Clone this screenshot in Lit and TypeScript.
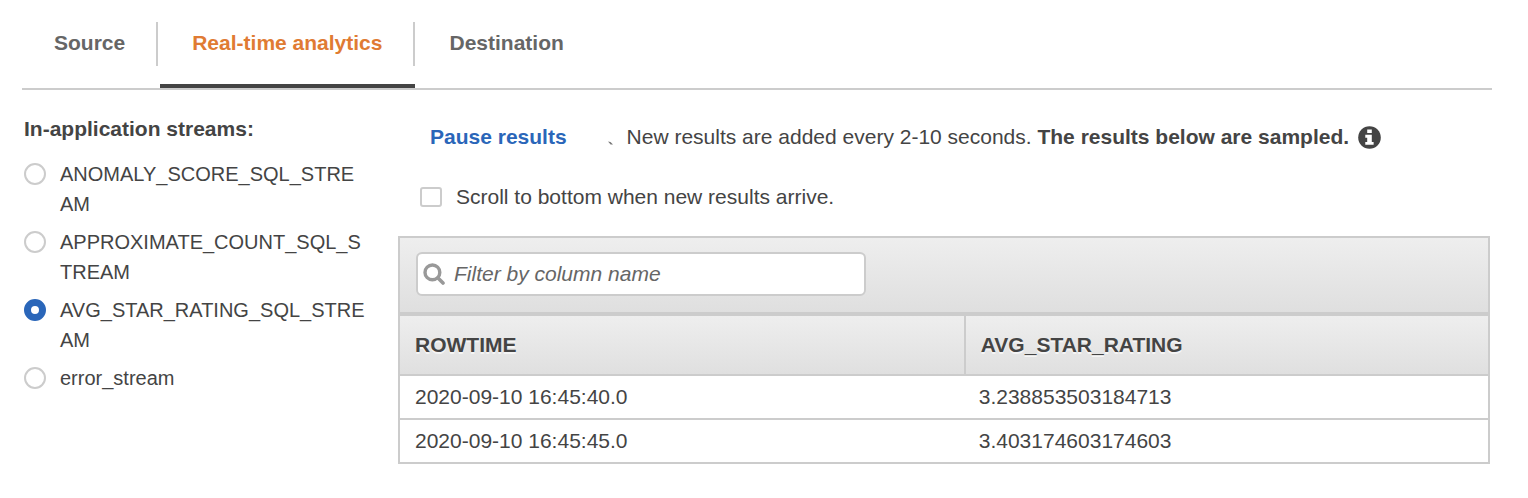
import { LitElement, html, css } from "lit";
import { customElement, state } from "lit/decorators.js";

const TABS = ["Source", "Real-time analytics", "Destination"];

const STREAMS = [
  "ANOMALY_SCORE_SQL_STREAM",
  "APPROXIMATE_COUNT_SQL_STREAM",
  "AVG_STAR_RATING_SQL_STREAM",
  "error_stream",
];

const COLUMNS = ["ROWTIME", "AVG_STAR_RATING"];

const ROWS = [
  ["2020-09-10 16:45:40.0", "3.238853503184713"],
  ["2020-09-10 16:45:45.0", "3.403174603174603"],
];

@customElement("app-root")
export class AppRoot extends LitElement {
  static styles = css`
    :host {
      display: block;
      padding: 22px 36px 34px 22px;
      background: #fff;
      color: #444;
      font: 21px/30px "Liberation Sans", Arial, sans-serif;
    }
    * {
      box-sizing: border-box;
    }
    button,
    input {
      margin: 0;
      font: inherit;
      color: inherit;
    }
    .tabs {
      display: flex;
      gap: 2px;
      border-bottom: 2px solid #ccc;
    }
    .tab {
      padding: 0 0 18px;
      border: 0;
      border-bottom: 4px solid transparent;
      background: none;
      color: #666;
      font-weight: bold;
      cursor: pointer;
    }
    .tab.active {
      color: #e07b33;
      border-bottom-color: #444;
    }
    .tab-label {
      display: block;
      padding: 0 31px 2px 32px;
      line-height: 42px;
      border-right: 2px solid #ccc;
    }
    .tab:last-child .tab-label {
      border-right-color: transparent;
    }
    .content {
      display: grid;
      grid-template-columns: 344px minmax(0, 1fr);
      gap: 32px;
      padding: 24px 2px 0 0;
    }
    .streams {
      margin: 0;
      padding: 0 0 0 2px;
      border: 0;
      min-width: 0;
    }
    .streams-title {
      padding: 0;
      margin-bottom: 15px;
      font-weight: bold;
    }
    .stream-list {
      display: grid;
      gap: 8px;
      font-size: 20px;
    }
    .stream {
      display: flex;
      align-items: flex-start;
      gap: 14px;
      word-break: break-all;
      cursor: pointer;
    }
    .radio {
      flex: none;
      appearance: none;
      width: 22px;
      height: 22px;
      margin-top: 4px;
      border: 2px solid #ccc;
      border-radius: 50%;
      background: #fff;
    }
    .radio:checked {
      border: 7px solid #2a66b9;
    }
    .status {
      display: flex;
      align-items: center;
      padding: 8px 0 0 32px;
    }
    .pause {
      padding: 0;
      border: 0;
      background: none;
      color: #2a66b9;
      font-weight: bold;
      cursor: pointer;
    }
    .spinner {
      width: 20px;
      height: 20px;
      margin: 0 6px 0 34px;
    }
    .info {
      width: 23px;
      height: 23px;
      margin-left: 9px;
    }
    .scroll {
      display: flex;
      align-items: center;
      gap: 14px;
      width: max-content;
      padding: 30px 0 24px 22px;
      cursor: pointer;
    }
    .check {
      appearance: none;
      width: 22px;
      height: 20px;
      border: 2px solid #ccc;
      border-radius: 3px;
      background: #fff;
    }
    .check:checked {
      background: #2a66b9;
    }
    .panel {
      border: 2px solid #ccc;
    }
    .filter {
      padding: 14px 16px 16px;
      border-bottom: 4px solid #ccc;
      background: linear-gradient(#eee, #dfdfdf);
    }
    .search {
      display: flex;
      align-items: center;
      gap: 9px;
      width: 450px;
      max-width: 100%;
      height: 44px;
      padding: 0 5px;
      border: 2px solid #ccc;
      border-radius: 6px;
      background: #fff;
    }
    .search-icon {
      flex: none;
      width: 22px;
      height: 22px;
    }
    .search-input {
      flex: 1;
      min-width: 0;
      padding: 0;
      border: 0;
      outline: 0;
      background: none;
    }
    .search-input::placeholder {
      color: #666;
      font-style: italic;
      opacity: 1;
    }
    .results {
      width: 100%;
      border-spacing: 0;
      table-layout: fixed;
    }
    .head {
      padding: 14px 15px;
      border-bottom: 2px solid #ccc;
      text-align: left;
      text-shadow: 0 2px 0 #f5f5f5;
    }
    .head:first-child {
      width: 52%;
      border-right: 2px solid #ccc;
    }
    .head-row {
      background: linear-gradient(#eee, #dfdfdf);
    }
    .cell {
      padding: 6px 15px;
    }
    .row + .row .cell {
      border-top: 2px solid #ccc;
    }
    .cell + .cell {
      padding-left: 13px;
    }
  `;

  @state() private tab = 1;
  @state() private stream = 2;
  @state() private paused = false;

  render() {
    return html`
      <nav class="tabs" role="tablist">
        ${TABS.map(
          (name, i) => html`<button
            class="tab ${i === this.tab ? "active" : ""}"
            role="tab"
            aria-selected=${i === this.tab}
            @click=${() => (this.tab = i)}
          ><span class="tab-label">${name}</span></button>`
        )}
      </nav>
      <div class="content">
        <fieldset class="streams">
          <legend class="streams-title">In-application streams:</legend>
          <div class="stream-list">
            ${STREAMS.map(
              (name, i) => html`<label class="stream">
                <input
                  class="radio"
                  type="radio"
                  name="stream"
                  .checked=${i === this.stream}
                  @change=${() => (this.stream = i)}
                />
                <span>${name}</span>
              </label>`
            )}
          </div>
        </fieldset>
        <main>
          <div class="status">
            <button class="pause" @click=${() => (this.paused = !this.paused)}>
              ${this.paused ? "Resume results" : "Pause results"}
            </button>
            <svg class="spinner" viewBox="0 0 20 20" aria-hidden="true">
              <path d="M7 14.5 L9.5 15 L12 17.6 L9.6 17.6 Z" fill="#777" />
            </svg>
            <span>New results are added every 2-10 seconds. <strong>The results below are sampled.</strong></span>
            <svg class="info" viewBox="0 0 24 24" role="img" aria-label="Information">
              <circle cx="12" cy="12" r="11.8" fill="#444" />
              <path d="M9.6 3.6h4.8v3.6H9.6z M7.6 9.2h6.8v7.4h1.9v3H7.6v-3h2v-4.4h-2z" fill="#fff" />
            </svg>
          </div>
          <label class="scroll">
            <input class="check" type="checkbox" />
            <span>Scroll to bottom when new results arrive.</span>
          </label>
          <section class="panel">
            <div class="filter">
              <label class="search">
                <svg class="search-icon" viewBox="0 0 22 22" aria-hidden="true">
                  <circle cx="9.4" cy="9.4" r="7.4" fill="none" stroke="#999" stroke-width="3.4" />
                  <path d="M15 15l5 5" stroke="#999" stroke-width="3.6" stroke-linecap="round" />
                </svg>
                <input class="search-input" type="text" placeholder="Filter by column name" aria-label="Filter by column name" />
              </label>
            </div>
            <table class="results">
              <thead>
                <tr class="head-row">
                  ${COLUMNS.map((c) => html`<th class="head" scope="col">${c}</th>`)}
                </tr>
              </thead>
              <tbody>
                ${ROWS.map(
                  (r) => html`<tr class="row">${r.map((v) => html`<td class="cell">${v}</td>`)}</tr>`
                )}
              </tbody>
            </table>
          </section>
        </main>
      </div>
    `;
  }
}
